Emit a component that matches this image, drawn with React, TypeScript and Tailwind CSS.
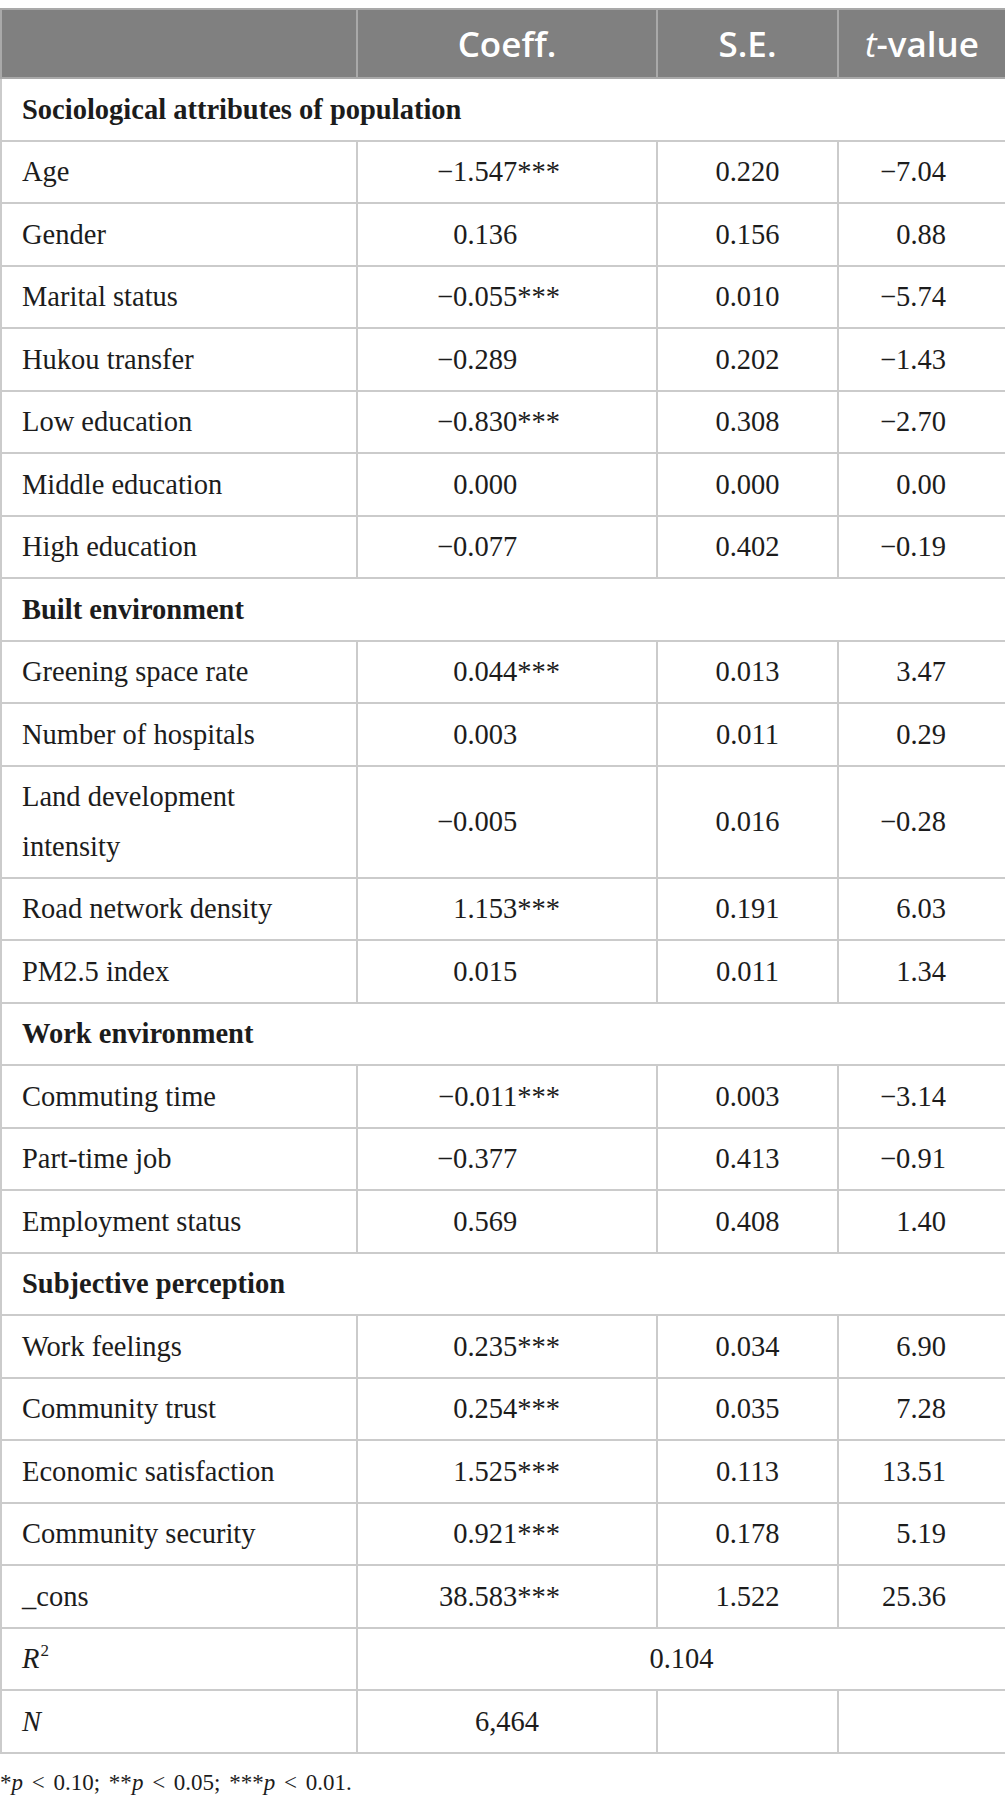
const serif = "font-['Liberation_Serif','Times_New_Roman',serif]";

type Row =
  | { kind: "section"; label: string }
  | { kind: "data"; label: string; coeff: string; stars?: boolean; se: string; t: string };

const rows: Row[] = [
  { kind: "section", label: "Sociological attributes of population" },
  { kind: "data", label: "Age", coeff: "−1.547", stars: true, se: "0.220", t: "−7.04" },
  { kind: "data", label: "Gender", coeff: "0.136", se: "0.156", t: "0.88" },
  { kind: "data", label: "Marital status", coeff: "−0.055", stars: true, se: "0.010", t: "−5.74" },
  { kind: "data", label: "Hukou transfer", coeff: "−0.289", se: "0.202", t: "−1.43" },
  { kind: "data", label: "Low education", coeff: "−0.830", stars: true, se: "0.308", t: "−2.70" },
  { kind: "data", label: "Middle education", coeff: "0.000", se: "0.000", t: "0.00" },
  { kind: "data", label: "High education", coeff: "−0.077", se: "0.402", t: "−0.19" },
  { kind: "section", label: "Built environment" },
  { kind: "data", label: "Greening space rate", coeff: "0.044", stars: true, se: "0.013", t: "3.47" },
  { kind: "data", label: "Number of hospitals", coeff: "0.003", se: "0.011", t: "0.29" },
  { kind: "data", label: "Land development intensity", coeff: "−0.005", se: "0.016", t: "−0.28" },
  { kind: "data", label: "Road network density", coeff: "1.153", stars: true, se: "0.191", t: "6.03" },
  { kind: "data", label: "PM2.5 index", coeff: "0.015", se: "0.011", t: "1.34" },
  { kind: "section", label: "Work environment" },
  { kind: "data", label: "Commuting time", coeff: "−0.011", stars: true, se: "0.003", t: "−3.14" },
  { kind: "data", label: "Part-time job", coeff: "−0.377", se: "0.413", t: "−0.91" },
  { kind: "data", label: "Employment status", coeff: "0.569", se: "0.408", t: "1.40" },
  { kind: "section", label: "Subjective perception" },
  { kind: "data", label: "Work feelings", coeff: "0.235", stars: true, se: "0.034", t: "6.90" },
  { kind: "data", label: "Community trust", coeff: "0.254", stars: true, se: "0.035", t: "7.28" },
  { kind: "data", label: "Economic satisfaction", coeff: "1.525", stars: true, se: "0.113", t: "13.51" },
  { kind: "data", label: "Community security", coeff: "0.921", stars: true, se: "0.178", t: "5.19" },
  { kind: "data", label: "_cons", coeff: "38.583", stars: true, se: "1.522", t: "25.36" },
];

const cell = "border-2 border-[#cbcbcb] py-[5.5px] leading-[49.5px] align-middle";
const head =
  "border-2 border-[#a9a9a9] bg-[#808080] py-[8.75px] leading-[49.5px] text-center text-[35px] font-semibold text-white font-['Open_Sans',sans-serif]";

export default function App() {
  return (
    <div className={`w-[1005px] bg-white pt-[8px] text-[#1c1c1c] ${serif}`}>
      <table className="w-[1005px] table-fixed border-collapse text-[28.5px]">
        <colgroup>
          <col className="w-[356px]" />
          <col className="w-[300px]" />
          <col className="w-[181px]" />
          <col className="w-[168px]" />
        </colgroup>
        <thead>
          <tr>
            <th className={head}></th>
            <th className={head}>Coeff.</th>
            <th className={head}>S.E.</th>
            <th className={head}>
              <span className="italic font-normal">t</span>-value
            </th>
          </tr>
        </thead>
        <tbody>
          {rows.map((r) =>
            r.kind === "section" ? (
              <tr key={r.label}>
                <td colSpan={4} className={`${cell} pl-[20px] font-bold`}>
                  {r.label}
                </td>
              </tr>
            ) : (
              <tr key={r.label}>
                <td className={`${cell} pl-[20px] pr-[60px]`}>{r.label}</td>
                <td className={`${cell} pr-[96px] text-right`}>
                  {r.coeff}
                  <span className={r.stars ? "" : "invisible"}>***</span>
                </td>
                <td className={`${cell} text-center`}>{r.se}</td>
                <td className={`${cell} pr-[59px] text-right`}>{r.t}</td>
              </tr>
            )
          )}
          <tr>
            <td className={`${cell} pl-[20px] italic`}>
              R<sup className="relative top-[-12px] ml-[1px] text-[17px] not-italic">2</sup>
            </td>
            <td colSpan={3} className={`${cell} text-center`}>
              0.104
            </td>
          </tr>
          <tr>
            <td className={`${cell} pl-[20px] italic`}>N</td>
            <td className={`${cell} text-center`}>6,464</td>
            <td className={cell}></td>
            <td className={cell}></td>
          </tr>
        </tbody>
      </table>
      <p className="mt-[14px] text-[23px] leading-[30px] [word-spacing:3px]">
        *<span className="italic">p</span> &lt; 0.10; **<span className="italic">p</span> &lt; 0.05; ***
        <span className="italic">p</span> &lt; 0.01.
      </p>
    </div>
  );
}
